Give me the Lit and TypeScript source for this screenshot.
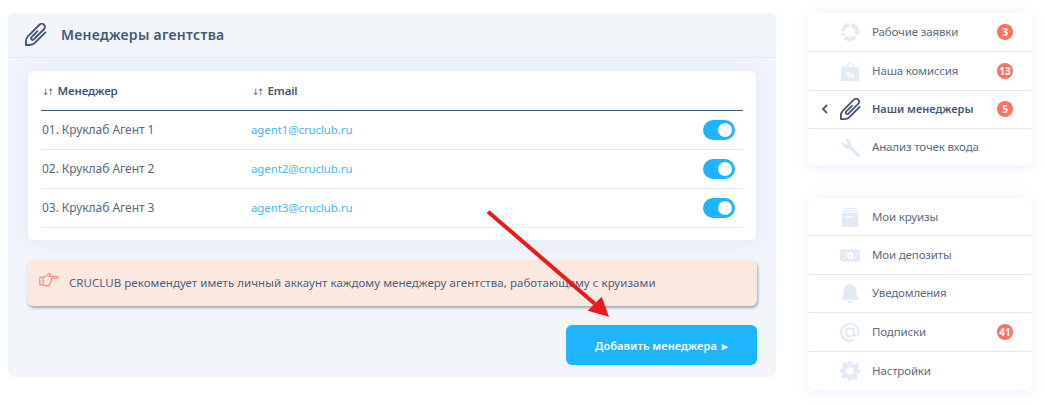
import { LitElement, html, css, svg } from 'lit';
import { customElement } from 'lit/decorators.js';

const managers = [
  { name: '01. Круклаб Агент 1', email: 'agent1@cruclub.ru' },
  { name: '02. Круклаб Агент 2', email: 'agent2@cruclub.ru' },
  { name: '03. Круклаб Агент 3', email: 'agent3@cruclub.ru' },
];

const clip = (cls: string) => html`
  <svg class=${cls} viewBox="0 0 24 24" fill="none" stroke="currentColor" stroke-width="2" stroke-linecap="round" stroke-linejoin="round">
    <path d="M13 8.500 6.800 14.700a1.700 1.700 0 0 0 2.400 2.400L19.800 6.500a3.300 3.300 0 0 0-4.700-4.700L3.200 13.700C1.500 15.400 1 17 1 19v4h4c2 0 3.600-.5 5.300-2.200l11-11"/>
  </svg>`;

const icons: Record<string, unknown> = {
  cycle: svg`<g fill="none" stroke="currentColor" stroke-width="5">
      <path d="M3.500 11A8.500 8.500 0 0 1 11 3.500"/>
      <path d="M13.500 3.600A8.500 8.500 0 0 1 20.500 11"/>
      <path d="M18.500 17.500A8.500 8.500 0 0 1 6 18"/>
      <path d="M4.700 16.300A8.500 8.500 0 0 1 3.500 13"/>
    </g>
    <path d="M16 11h9l-4.500 5.500z"/>`,
  sale: svg`<path d="M1 7.500h22V24H1z"/><path d="M6 7.500 12 1.500l6 6" fill="none" stroke="currentColor" stroke-width="1.400"/><text x="12" y="20.500" font-size="11" font-weight="700" text-anchor="middle" fill="#fff" font-family="Noto Sans, sans-serif">%</text>`,
  wrench: svg`<path d="M2.500 5.500 6.500 9.500 9.500 6.500 5.500 2.500A6.500 6.500 0 0 1 13.500 10.500L23.500 20.500a2 2 0 0 1-3 3L10.500 13.500A6.500 6.500 0 0 1 2.500 5.500z"/>`,
  box: svg`<path d="M4 1h16v1.500H4zM2.500 4h19v1.500h-19zM2 7h20v15a2 2 0 0 1-2 2H4a2 2 0 0 1-2-2zM8 10v3h8v-3h-1.500v1.500h-5V10z" fill-rule="evenodd"/>`,
  cash: svg`<path d="M3 5h18a3 3 0 0 1 3 3v9a3 3 0 0 1-3 3H3a3 3 0 0 1-3-3V8a3 3 0 0 1 3-3zm9 3.500a4 4 0 1 0 0 8 4 4 0 0 0 0-8zm0 2.500a1.500 1.500 0 1 1 0 3 1.500 1.500 0 0 1 0-3zM4 8.500v1.500h1.500V8.500zm14.500 0v1.500H20V8.500zM4 15v1.500h1.500V15zm14.500 0v1.500H20V15z" fill-rule="evenodd"/>`,
  bell: svg`<path d="M12 0a2 2 0 0 1 2 2v.500c4 1 6 4.500 6 8.500 0 4 1 6 3 8v1H1v-1c2-2 3-4 3-8 0-4 2-7.500 6-8.500V2a2 2 0 0 1 2-2zM9 22h6a3 2 0 0 1-6 0z"/>`,
  at: svg`<path d="M12 1a11.500 11.500 0 1 0 6 21l-1.300-2.200A9 9 0 1 1 21 12.500c0 1.500-.8 2.500-1.800 2.500s-1.700-.8-1.700-2V7h-2.300v1A6 6 0 1 0 16 16.500 4 4 0 0 0 19.200 17.500C21.900 17.500 23.500 15.300 23.500 12.500A11.500 11.500 0 0 0 12 1zm0 8a3.500 3.500 0 1 1 0 7 3.500 3.500 0 0 1 0-7z" fill-rule="evenodd"/>`,
  gear: svg`<path d="M10 0h4l.7 3.200 2.400 1 2.800-1.800 2.800 2.800-1.800 2.800 1 2.400L24 10v4l-3.100.7-1 2.400 1.800 2.800-2.800 2.800-2.800-1.800-2.400 1L14 24h-4l-.7-3.100-2.400-1-2.800 1.800-2.800-2.800 1.800-2.800-1-2.400L0 14v-4l3.100-.7 1-2.400-1.800-2.800 2.800-2.800 2.800 1.800 2.400-1zM12 7.500a4.500 4.500 0 1 0 0 9 4.500 4.500 0 0 0 0-9z" fill-rule="evenodd"/>`,
};

@customElement('app-root')
export class AppRoot extends LitElement {
  static styles = css`
    :host {
      display: block;
      position: relative;
      width: 1045px;
      height: 405px;
      background: #fff;
      overflow: hidden;
      font-family: 'Noto Sans', sans-serif;
      font-size: 12px;
      color: #4a5a70;
    }

    .page {
      display: flex;
      align-items: flex-start;
      gap: 32px;
      padding: 13px 13px 0 8px;
    }

    .panel {
      flex: none;
      box-sizing: border-box;
      width: 768px;
      height: 364px;
      background: #f2f6fb;
      border-radius: 6px;
    }

    .panel__head {
      display: flex;
      align-items: center;
      gap: 13px;
      box-sizing: border-box;
      height: 45px;
      padding: 0 0 2px 17px;
      border-bottom: 1px solid #e2e9f5;
      font-size: 14px;
      font-weight: 600;
      letter-spacing: 0.28px;
      color: #475872;
    }

    .panel__icon {
      width: 23px;
      height: 23px;
      color: #475872;
    }

    .panel__body {
      padding: 13px 19px 0 19px;
    }

    .card {
      box-sizing: border-box;
      height: 169px;
      margin: 0 1px;
      padding: 0 13px;
      background: #fff;
      border-radius: 6px;
      box-shadow: 0 0 18px 6px #e6ecf9;
    }

    .row {
      display: grid;
      grid-template-columns: 210px 1fr 40px;
      align-items: center;
      box-sizing: border-box;
      height: 39px;
      border-bottom: 1px solid #e3ebf5;
      color: #5a6a7e;
    }

    .row--head {
      height: 40px;
      border-bottom: 1px solid #3f5873;
      font-weight: 600;
      font-size: 11.500px;
      letter-spacing: -0.15px;
      color: #475872;
    }

    .row__sort {
      display: inline-block;
      width: 16.500px;
      padding-left: 1px;
      box-sizing: border-box;
      font: 400 9px 'DejaVu Sans', sans-serif;
      letter-spacing: -2.500px;
      color: #5f6c7e;
    }

    .row__name {
      margin-top: -2px;
      padding-left: 1px;
      letter-spacing: -0.05px;
    }

    .row__email {
      margin-top: -2px;
      font-size: 11.500px;
      letter-spacing: -0.1px;
      color: #45b9f7;
    }

    .toggle {
      position: relative;
      width: 32px;
      height: 20px;
      border-radius: 10px;
      background: #1eb4ff;
    }

    .toggle::after {
      content: '';
      position: absolute;
      top: 3px;
      right: 3px;
      width: 14px;
      height: 14px;
      border-radius: 50%;
      background: #fff;
    }

    .alert {
      display: flex;
      align-items: center;
      gap: 10px;
      box-sizing: border-box;
      height: 46px;
      margin-top: 20px;
      padding: 0 12px;
      background: #fbe9e1;
      border-radius: 6px;
      box-shadow: 1px 2px 3px #9fa8b4;
      font-size: 11.500px;
      letter-spacing: 0.05px;
      color: #4f5f78;
    }

    .alert span {
      margin-top: -1px;
    }

    .alert__icon {
      width: 20px;
      height: 15px;
      margin-top: -5px;
      color: #f0786a;
    }

    .actions {
      display: flex;
      justify-content: flex-end;
      margin-top: 19px;
    }

    .button {
      display: flex;
      align-items: center;
      justify-content: center;
      width: 191px;
      height: 40px;
      padding: 0;
      border: none;
      border-radius: 6px;
      background: #1eb4ff;
      color: #fff;
      font: 600 11px 'Noto Sans', sans-serif;
      letter-spacing: 0.1px;
    }

    .button__mark {
      margin-left: 5px;
    }

    .side {
      display: flex;
      flex-direction: column;
      gap: 33px;
      width: 224px;
    }

    .menu {
      background: #fff;
      border-radius: 6px;
      box-shadow: 0 2px 16px #ecf0f9;
    }

    .item {
      display: grid;
      grid-template-columns: 32px 32px 1fr 26px;
      align-items: center;
      box-sizing: border-box;
      height: 38.500px;
      padding-right: 14px;
      border-bottom: 1px solid #e3ebf5;
      font-size: 11.500px;
      letter-spacing: -0.15px;
      color: #5d6c80;
    }

    .item:last-child {
      border-bottom: none;
    }

    .menu--top .item:first-child {
      height: 39px;
    }

    .menu--top .item:last-child {
      height: 36px;
    }

    .menu--bottom .item:first-child {
      height: 38px;
    }

    .item__label {
      margin-top: -1px;
    }

    .item--active {
      font-size: 11px;
      font-weight: 600;
      letter-spacing: 0;
      color: #475872;
    }

    .item__back {
      width: 6px;
      height: 10px;
      margin-left: 14px;
      color: #475872;
    }

    .item__icon {
      width: 20px;
      height: 20px;
      color: #e1eaf5;
      fill: currentColor;
    }

    .item__clip {
      width: 22px;
      height: 22px;
      color: #475872;
    }

    .badge {
      display: flex;
      align-items: center;
      justify-content: center;
      justify-self: center;
      width: 16px;
      height: 16px;
      border-radius: 50%;
      background: #fb7263;
      color: #fff;
      font-size: 10px;
      font-weight: 700;
      letter-spacing: 0;
    }

    .arrow {
      position: absolute;
      left: 480px;
      top: 205px;
      width: 140px;
      height: 120px;
      pointer-events: none;
    }
  `;

  private renderItem(label: string, icon: string, badge?: number) {
    return html`
      <div class="item">
        <span></span>
        <svg class="item__icon" viewBox="0 0 24 24">${icons[icon]}</svg>
        <span class="item__label">${label}</span>
        ${badge !== undefined ? html`<span class="badge">${badge}</span>` : ''}
      </div>
    `;
  }

  render() {
    return html`
      <div class="page">
        <section class="panel">
          <header class="panel__head">
            ${clip('panel__icon')}
            <span>Менеджеры агентства</span>
          </header>
          <div class="panel__body">
            <div class="card">
              <div class="row row--head">
                <span><span class="row__sort">↓↑</span>Менеджер</span>
                <span><span class="row__sort">↓↑</span>Email</span>
                <span></span>
              </div>
              ${managers.map(
                (m) => html`
                  <div class="row">
                    <span class="row__name">${m.name}</span>
                    <span class="row__email">${m.email}</span>
                    <span class="toggle"></span>
                  </div>
                `
              )}
            </div>
            <div class="alert">
              <svg class="alert__icon" viewBox="0 0 24 18" fill="none" stroke="currentColor" stroke-width="1.200" stroke-linejoin="round">
                <path d="M1 5h4l3-1 4-3.200 2 .6-2 2.600h10.300c1 0 1 2.200 0 2.200h-7.300v2.300c0 .8-.6 1.300-1.300 1.300v1.800c0 .7-.6 1.200-1.300 1.200v1.200c0 1-.8 1.400-1.500 1.400H7c-1.500 0-2-1-3-1.200H1z"/>
                <path d="M5 5v9"/>
              </svg>
              <span>CRUCLUB рекомендует иметь личный аккаунт каждому менеджеру агентства, работающему с круизами</span>
            </div>
            <div class="actions">
              <button class="button">Добавить менеджера<span class="button__mark">▸</span></button>
            </div>
          </div>
        </section>
        <aside class="side">
          <nav class="menu menu--top">
            ${this.renderItem('Рабочие заявки', 'cycle', 3)}
            ${this.renderItem('Наша комиссия', 'sale', 13)}
            <div class="item item--active">
              <svg class="item__back" viewBox="0 0 6 10" fill="none" stroke="currentColor" stroke-width="1.800">
                <path d="M5 1 1 5l4 4"/>
              </svg>
              ${clip('item__clip')}
              <span class="item__label">Наши менеджеры</span>
              <span class="badge">5</span>
            </div>
            ${this.renderItem('Анализ точек входа', 'wrench')}
          </nav>
          <nav class="menu menu--bottom">
            ${this.renderItem('Мои круизы', 'box')}
            ${this.renderItem('Мои депозиты', 'cash')}
            ${this.renderItem('Уведомления', 'bell')}
            ${this.renderItem('Подписки', 'at', 41)}
            ${this.renderItem('Настройки', 'gear')}
          </nav>
        </aside>
      </div>
      <svg class="arrow" viewBox="0 0 140 120">
        <path d="M8 6.700 114.700 98.700" stroke="#e81c1c" stroke-width="4"/>
        <path d="M129 111.700 107.700 105.700 121.700 91.700z" fill="#e81c1c"/>
      </svg>
    `;
  }
}
